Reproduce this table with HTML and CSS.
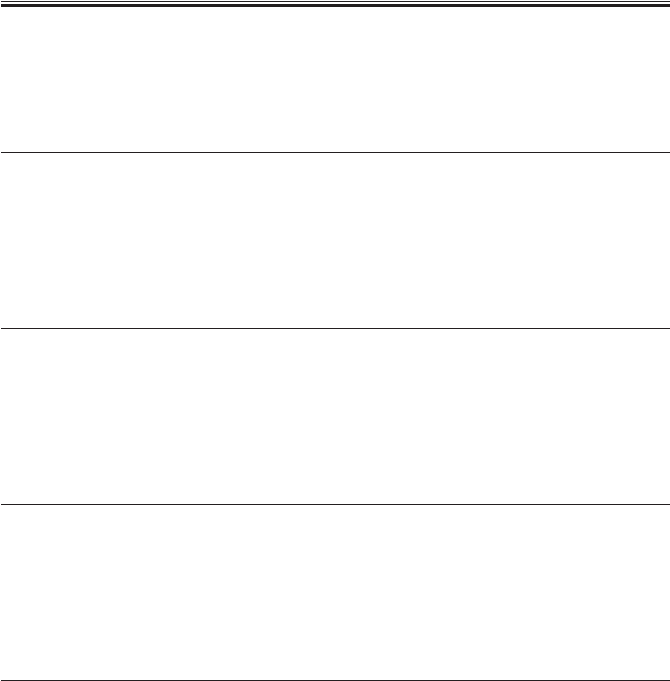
FILE: index.html
```html
<!DOCTYPE html>
<html>
<head>
<meta charset="utf-8">
<link rel="stylesheet" href="styles.css">
</head>
<body>
<div class="table">
  <div class="head"></div>
  <div class="row first"></div>
  <div class="row"></div>
  <div class="row"></div>
  <div class="row"></div>
</div>
</body>
</html>
```
FILE: styles.css
```css
html, body {
  margin: 0;
  padding: 0;
  background: #ffffff;
  font-family: "Liberation Sans", Arial, sans-serif;
}
.table {
  padding: 1px 0 0 1px;
  display: flex;
  flex-direction: column;
}
.head {
  height: 2px;
  border-top: 1px solid #231f20;
  border-bottom: 3px solid #231f20;
}
.row {
  height: 175px;
  border-bottom: 1px solid #231f20;
}
.row.first {
  height: 145px;
}
```
